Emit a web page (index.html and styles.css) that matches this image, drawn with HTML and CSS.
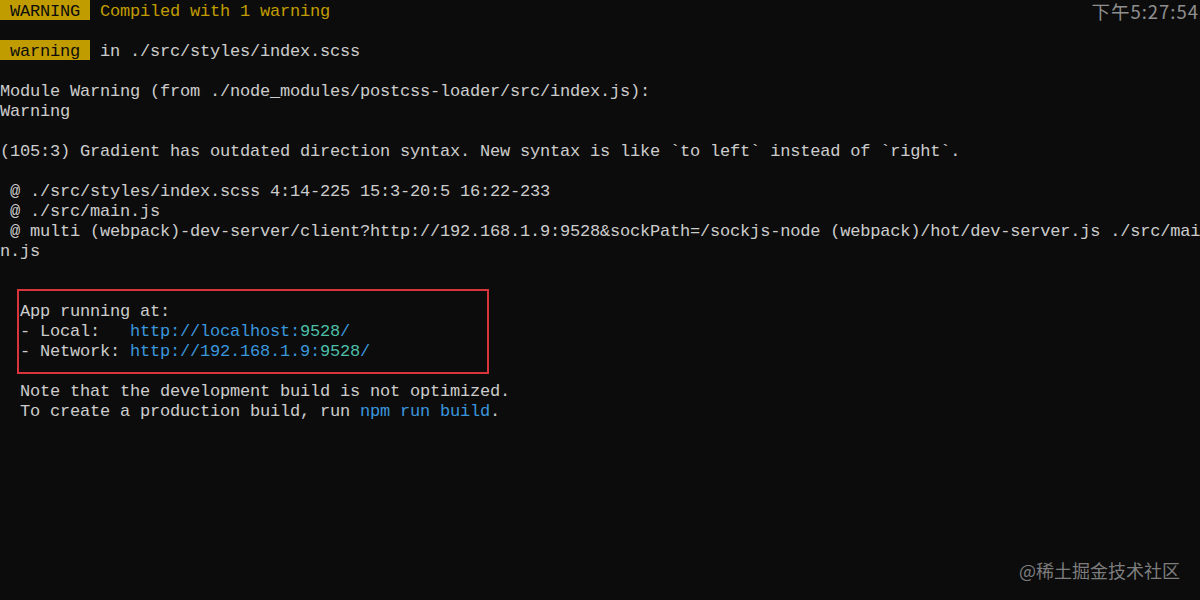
FILE: index.html
```html
<!DOCTYPE html>
<html>
<head>
<meta charset="utf-8">
<link rel="stylesheet" href="styles.css">
</head>
<body>
<div class="term">
  <div class="line top"><span><span class="badge"> WARNING </span> <span class="yellow">Compiled with 1 warning</span></span><span class="time">下午5:27:54</span></div>
  <div class="line"> </div>
  <div class="line"><span class="badge"> warning </span> in ./src/styles/index.scss</div>
  <div class="line"> </div>
  <div class="line">Module Warning (from ./node_modules/postcss-loader/src/index.js):</div>
  <div class="line">Warning</div>
  <div class="line"> </div>
  <div class="line">(105:3) Gradient has outdated direction syntax. New syntax is like `to left` instead of `right`.</div>
  <div class="line"> </div>
  <div class="line"> @ ./src/styles/index.scss 4:14-225 15:3-20:5 16:22-233</div>
  <div class="line"> @ ./src/main.js</div>
  <div class="line"> @ multi (webpack)-dev-server/client?http://192.168.1.9:9528&amp;sockPath=/sockjs-node (webpack)/hot/dev-server.js ./src/mai</div>
  <div class="line">n.js</div>
  <div class="line"> </div>
  <div class="box">
    <div class="line">App running at:</div>
    <div class="line">- Local:   <span class="blue">http://localhost:</span><span class="cyan">9528</span><span class="blue">/</span></div>
    <div class="line">- Network: <span class="blue">http://192.168.1.9:</span><span class="cyan">9528</span><span class="blue">/</span></div>
  </div>
  <div class="line">  Note that the development build is not optimized.</div>
  <div class="line">  To create a production build, run <span class="blue">npm run build</span>.</div>
</div>
<div class="watermark">@稀土掘金技术社区</div>
</body>
</html>
```
FILE: styles.css
```css
html, body {
  margin: 0;
  padding: 0;
  background: #0c0c0c;
  width: 1200px;
  height: 600px;
  overflow: hidden;
}
.term {
  font-family: "Liberation Mono", "Noto Sans CJK SC", monospace;
  font-size: 17px;
  letter-spacing: -0.2px;
  color: #cccccc;
}
.line {
  height: 20px;
  line-height: 24px;
  white-space: pre;
}
.top {
  display: flex;
  justify-content: space-between;
  align-items: flex-start;
}
.badge {
  display: inline-block;
  height: 20px;
  line-height: 24px;
  vertical-align: top;
  background: #c19c00;
  color: #0c0c0c;
}
.yellow { color: #c19c00; }
.blue { color: #3a96dd; }
.cyan { color: #4cbfa6; }
.time {
  font-family: "Noto Sans CJK SC", "Liberation Sans", sans-serif;
  letter-spacing: 1px;
  font-size: 18.5px;
  line-height: 22px;
  padding-right: 1px;
  color: #8f8f8f;
}
.box {
  margin: 9px 0 6px 17px;
  width: 465px;
  padding: 9px 2px 12px 1px;
  border: 2px solid #d9333c;
}
.watermark {
  position: absolute;
  right: 20px;
  bottom: 19px;
  font-family: "Noto Sans CJK SC", sans-serif;
  font-size: 18px;
  line-height: 22px;
  color: #7d7d7d;
}
```
